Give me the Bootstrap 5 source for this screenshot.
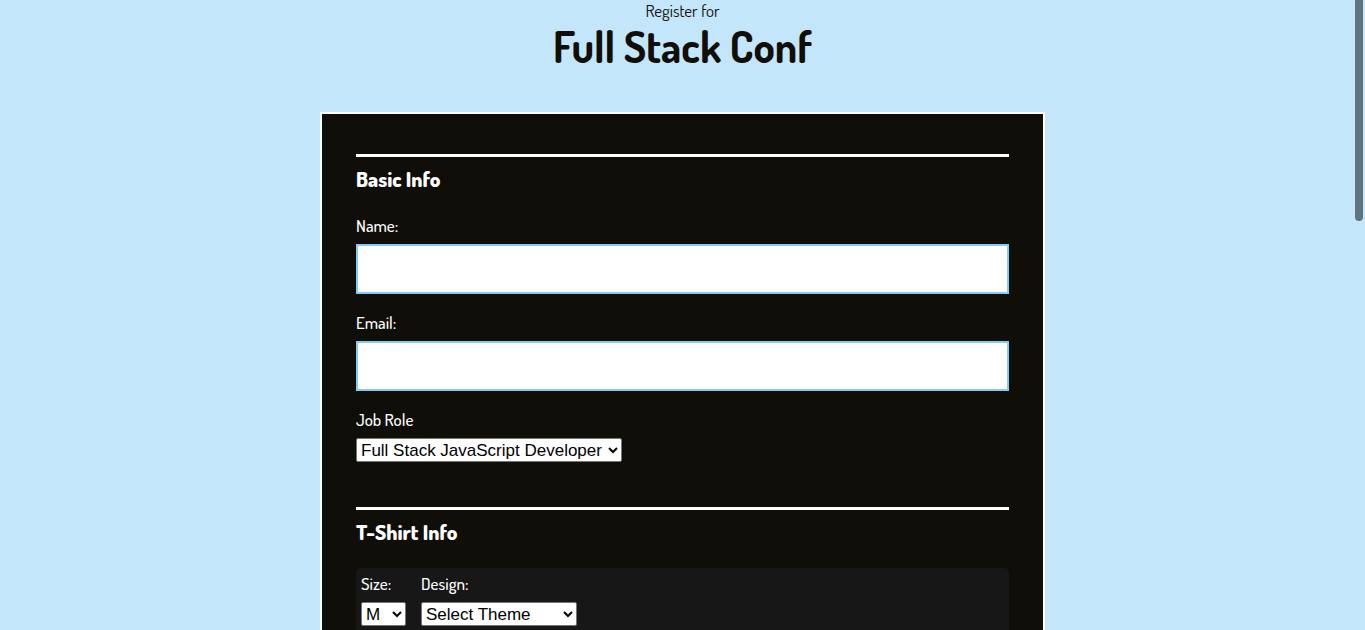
<!DOCTYPE html>
<html lang="en">
<head>
<meta charset="utf-8">
<meta name="viewport" content="width=device-width, initial-scale=1">
<title>Full Stack Conf</title>
<link href="https://cdn.jsdelivr.net/npm/bootstrap@5.3.0/dist/css/bootstrap.min.css" rel="stylesheet">
<style>
  body { background: #c3e6fa; color: #100e09; font-family: Dosis, "Liberation Sans Narrow", Lato, sans-serif; font-size: 17px; line-height: 22px; }
  .conf-title { font-size: 43px; font-weight: 700; line-height: 48px; }
  .conf-form { max-width: 725px; background: #100e09; color: #fff; border: 2px solid #fff; padding: 40px 34px; margin-top: 42px; }
  .conf-form label { font-weight: 500; }
  .form-section { border-top: 3px solid #fff; }
  .form-section + .form-section { margin-top: 45px; }
  .form-section legend { font-size: 21px; font-weight: 800; line-height: 24px; margin: 10px 0 24px; }
  .text-field { height: 50px; border: 2px solid #85c9f7; margin: 7px 0 18px; padding: 8px; background: #fff; }
  .pick { font-family: "Liberation Sans", sans-serif; font-size: 17px; line-height: 20px; height: 24px; color: #000; background: #fff; border: 1px solid #767676; border-radius: 2px; padding: 0; margin-top: 7px; }
  .pick-role { width: 266px; }
  .pick-size { width: 45px; }
  .pick-theme { width: 156px; }
  .shirt-box { background: #171717; border-radius: 5px; padding: 5px 5px 20px; gap: 15px; }
  .scroll-thumb { right: 2px; width: 8px; height: 35vh; background: #61737d; border-radius: 0 0 4px 4px; }
</style>
</head>
<body>
<div class="vh-100 overflow-hidden position-relative">
  <header class="text-center">
    <p class="m-0">Register for</p>
    <h1 class="conf-title m-0">Full Stack Conf</h1>
  </header>
  <form class="conf-form mx-auto">
    <fieldset class="form-section">
      <legend>Basic Info</legend>
      <label class="d-block" for="name">Name:</label>
      <input class="text-field d-block w-100" type="text" id="name">
      <label class="d-block" for="email">Email:</label>
      <input class="text-field d-block w-100" type="email" id="email">
      <label class="d-block" for="role">Job Role</label>
      <select class="pick pick-role d-block" id="role"><option>Full Stack JavaScript Developer</option></select>
    </fieldset>
    <fieldset class="form-section">
      <legend>T-Shirt Info</legend>
      <div class="shirt-box d-flex">
        <div>
          <label class="d-block" for="size">Size:</label>
          <select class="pick pick-size d-block" id="size"><option>M</option></select>
        </div>
        <div>
          <label class="d-block" for="design">Design:</label>
          <select class="pick pick-theme d-block" id="design"><option>Select Theme</option></select>
        </div>
      </div>
    </fieldset>
  </form>
  <div class="scroll-thumb position-absolute top-0" aria-hidden="true"></div>
</div>
<script src="https://cdn.jsdelivr.net/npm/bootstrap@5.3.0/dist/js/bootstrap.bundle.min.js"></script>
</body>
</html>
